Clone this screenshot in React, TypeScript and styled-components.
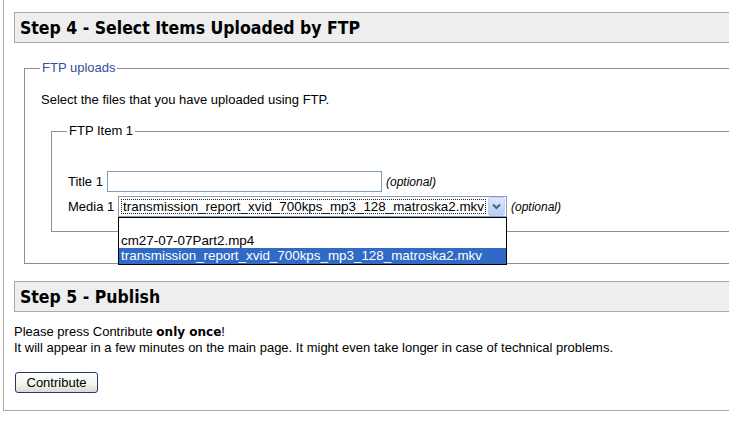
import styled, { createGlobalStyle } from "styled-components";

const GlobalStyle = createGlobalStyle`
  html, body {
    margin: 0;
    padding: 0;
    background: #ffffff;
    overflow: hidden;
  }
  body {
    font-family: "Liberation Sans", Arial, sans-serif;
    font-size: 13px;
    color: #000000;
  }
`;

const Page = styled.div`
  margin-left: 3px;
  width: 800px;
  padding: 12px 0 17px 10px;
  border-left: 1px solid #a8a8a8;
  border-bottom: 1px solid #a8a8a8;
`;

const StepHeader = styled.h2<{ $top?: number }>`
  margin: ${(p) => p.$top ?? 0}px 0 0 0;
  height: 29px;
  padding: 0 0 0 5px;
  display: flex;
  align-items: center;
  background: #eeeeee;
  border: 1px solid #a8a8a8;
  border-right: none;
  font-family: "DejaVu Sans Condensed", "DejaVu Sans", Verdana, sans-serif;
  font-stretch: condensed;
  font-weight: bold;
  font-size: 17.5px;
  color: #000000;
`;

const Fieldset = styled.fieldset<{ $indent: number; $top: number; $bottom: number }>`
  margin: ${(p) => p.$top}px 0 0 ${(p) => p.$indent}px;
  padding: 0 0 ${(p) => p.$bottom}px 16px;
  border: 1px solid #8e8e8e;
  border-right: none;
  min-width: 0;
`;

const Legend = styled.legend<{ $blue?: boolean }>`
  padding: 0 2px;
  margin-left: -1px;
  font-size: 13px;
  line-height: 14px;
  color: ${(p) => (p.$blue ? "#35509a" : "#000000")};
`;

const Intro = styled.p`
  margin: 18px 0 0 0;
  line-height: 14px;
`;

const FieldRow = styled.div<{ $top: number }>`
  margin-top: ${(p) => p.$top}px;
  display: flex;
  align-items: center;
  height: 21px;
  position: relative;
`;

const FieldLabel = styled.span`
  width: 39px;
  white-space: nowrap;
`;

const TextInput = styled.div`
  width: 273px;
  height: 19px;
  border: 1px solid #7f9db9;
  background: #ffffff;
`;

const Optional = styled.em`
  margin-left: 4px;
  font-size: 12px;
  font-style: italic;
`;

const SelectBox = styled.div`
  width: 385px;
  height: 19px;
  margin-left: 11px;
  border: 1px solid #7f9db9;
  background: #ffffff;
  display: flex;
  align-items: center;
  padding-left: 2px;
  gap: 2px;
`;

const SelectValue = styled.span`
  flex: 1;
  height: 15px;
  line-height: 15px;
  padding-left: 2px;
  font-size: 13.4px;
  outline: 1px dotted #222222;
  outline-offset: -1px;
  white-space: nowrap;
  overflow: hidden;
`;

const ArrowButton = styled.span`
  width: 15px;
  height: 17px;
  margin-right: 1px;
  border: 1px solid #c3d3fd;
  border-radius: 2px;
  background: linear-gradient(#dbe6ff, #b9cdf8);
  display: flex;
  align-items: center;
  justify-content: center;
`;

const DropList = styled.ul`
  position: absolute;
  left: 50px;
  top: 21px;
  width: 387px;
  margin: 0;
  padding: 0;
  list-style: none;
  border: 1px solid #000000;
  background: #ffffff;
  z-index: 2;
`;

const DropItem = styled.li<{ $selected?: boolean }>`
  height: ${(p) => (p.$selected ? 16 : 15)}px;
  line-height: ${(p) => (p.$selected ? 16 : 15)}px;
  padding-left: 2px;
  font-size: 13.4px;
  white-space: nowrap;
  background: ${(p) => (p.$selected ? "#316ac5" : "#ffffff")};
  color: ${(p) => (p.$selected ? "#ffffff" : "#000000")};
`;

const Notice = styled.p`
  margin: 12px 0 0 0;
  line-height: 16px;
`;

const Strong = styled.b`
  font-family: "DejaVu Sans", Verdana, sans-serif;
  font-size: 12px;
`;

const Button = styled.button`
  margin: 16px 0 0 1px;
  width: 83px;
  height: 21px;
  padding: 0;
  border: 1px solid #1c3c6e;
  border-radius: 3px;
  background: linear-gradient(#ffffff, #f3f3ef 60%, #dcdad0);
  font-family: "Liberation Sans", Arial, sans-serif;
  font-size: 13px;
  color: #000000;
`;

const options = [
  "",
  "cm27-07-07Part2.mp4",
  "transmission_report_xvid_700kps_mp3_128_matroska2.mkv",
];

export default function App() {
  const selected = options[2];
  return (
    <>
      <GlobalStyle />
      <Page>
        <StepHeader>Step 4 - Select Items Uploaded by FTP</StepHeader>
        <Fieldset $indent={10} $top={18} $bottom={31}>
          <Legend $blue>FTP uploads</Legend>
          <Intro>Select the files that you have uploaded using FTP.</Intro>
          <Fieldset $indent={10} $top={17} $bottom={14}>
            <Legend>FTP Item 1</Legend>
            <FieldRow $top={33}>
              <FieldLabel>Title 1</FieldLabel>
              <TextInput />
              <Optional>(optional)</Optional>
            </FieldRow>
            <FieldRow $top={4}>
              <FieldLabel>Media 1</FieldLabel>
              <SelectBox>
                <SelectValue>{selected}</SelectValue>
                <ArrowButton>
                  <svg width="9" height="7" viewBox="0 0 9 7">
                    <path d="M1 1.5 L4.5 5 L8 1.5" fill="none" stroke="#4d6185" strokeWidth="2" />
                  </svg>
                </ArrowButton>
              </SelectBox>
              <Optional>(optional)</Optional>
              <DropList>
                {options.map((o, i) => (
                  <DropItem key={i} $selected={o === selected}>
                    {o || "\u00a0"}
                  </DropItem>
                ))}
              </DropList>
            </FieldRow>
          </Fieldset>
        </Fieldset>
        <StepHeader $top={17}>Step 5 - Publish</StepHeader>
        <Notice>
          Please press Contribute <Strong>only once</Strong>!
          <br />
          It will appear in a few minutes on the main page. It might even take longer in case of technical problems.
        </Notice>
        <Button>Contribute</Button>
      </Page>
    </>
  );
}
